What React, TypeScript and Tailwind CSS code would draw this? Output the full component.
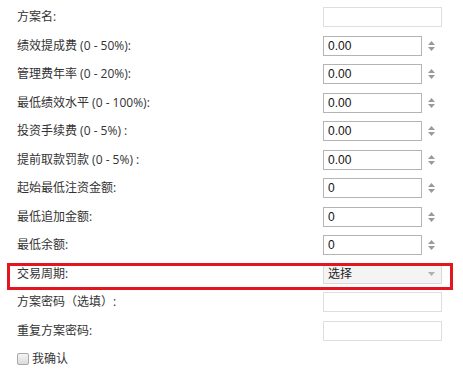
import React from "react";

type Row = { label: string; kind: "text" | "number" | "select"; value?: string };

const rows: Row[] = [
  { label: "方案名:", kind: "text" },
  { label: "绩效提成费 (0 - 50%):", kind: "number", value: "0.00" },
  { label: "管理费年率 (0 - 20%):", kind: "number", value: "0.00" },
  { label: "最低绩效水平 (0 - 100%):", kind: "number", value: "0.00" },
  { label: "投资手续费 (0 - 5%) :", kind: "number", value: "0.00" },
  { label: "提前取款罚款 (0 - 5%) :", kind: "number", value: "0.00" },
  { label: "起始最低注资金额:", kind: "number", value: "0" },
  { label: "最低追加金额:", kind: "number", value: "0" },
  { label: "最低余额:", kind: "number", value: "0" },
  { label: "交易周期:", kind: "select", value: "选择" },
  { label: "方案密码（选填）:", kind: "text" },
  { label: "重复方案密码:", kind: "text" },
];

function Spinner() {
  return (
    <svg width="9" height="14" viewBox="0 0 9 14" className="ml-[5px]">
      <path d="M4.5 2 L8 6 L1 6 Z" fill="#9a9a9a" />
      <path d="M1 8 L8 8 L4.5 12 Z" fill="#9a9a9a" />
    </svg>
  );
}

function Field({ row }: { row: Row }) {
  if (row.kind === "text") {
    return <div className="h-[20px] w-[119px] border border-[#dedede] bg-white" />;
  }
  if (row.kind === "number") {
    return (
      <div className="flex items-center">
        <div className="flex h-[20px] w-[99px] items-center border border-[#b4b4b4] bg-white pl-[4px] text-[12px] text-[#111]" style={{ fontFamily: '"Liberation Sans", Arial, sans-serif' }}>
          {row.value}
        </div>
        <Spinner />
      </div>
    );
  }
  return (
    <div className="flex h-[20px] w-[119px] items-center justify-between border border-[#dadada] bg-[#f4f4f4] pl-[4px] pr-[6px] text-[12px] text-[#222]">
      <span>{row.value}</span>
      <svg width="7" height="4" viewBox="0 0 7 4">
        <path d="M0 0 L7 0 L3.5 4 Z" fill="#b0b0b0" />
      </svg>
    </div>
  );
}

export default function App() {
  return (
    <div
      className="h-[370px] w-[463px] bg-white pt-[7px] text-[12px] text-[#333]"
      style={{ fontFamily: '"Open Sans", "Noto Sans CJK SC", sans-serif' }}
    >
      {rows.map((row, i) => (
        <div key={i} className="relative flex h-[28.5px] items-start">
          <div className="flex h-[20px] w-[323px] items-center pl-[17px]">{row.label}</div>
          <Field row={row} />
          {row.kind === "select" && (
            <div className="pointer-events-none absolute left-[7px] top-[-1px] h-[27px] w-[446px] border-[3px] border-[#e3161f]" />
          )}
        </div>
      ))}
      <div className="flex items-center pl-[17px] pt-[1px]">
        <div className="h-[12px] w-[12px] rounded-[2px] border border-[#a8a8a8] bg-gradient-to-b from-[#f4f4f4] to-[#dcdcdc]" />
        <span className="ml-[3px]">我确认</span>
      </div>
    </div>
  );
}
